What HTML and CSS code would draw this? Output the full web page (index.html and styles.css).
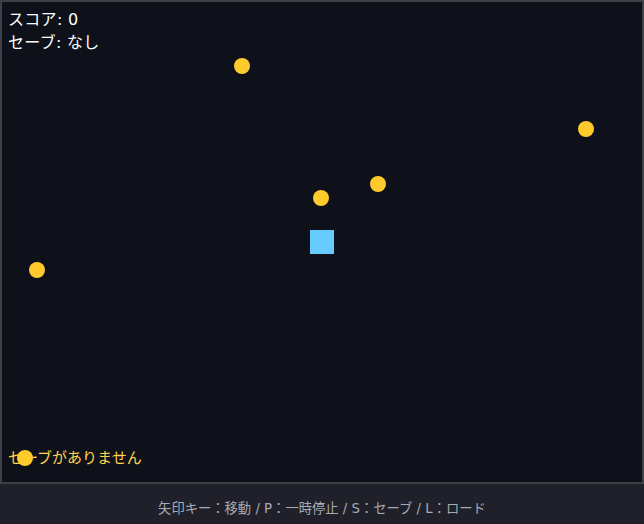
FILE: index.html
```html
<!DOCTYPE html>
<html lang="ja">
<head>
<meta charset="utf-8">
<link rel="stylesheet" href="styles.css">
</head>
<body>
<div class="game">
  <div class="hud">
    <div class="hud-line">スコア: 0</div>
    <div class="hud-line">セーブ: なし</div>
  </div>
  <div class="message">セーブがありません</div>
  <div class="coin" style="left:232px;top:56px"></div>
  <div class="coin" style="left:576px;top:119px"></div>
  <div class="coin" style="left:368px;top:174px"></div>
  <div class="coin" style="left:311px;top:188px"></div>
  <div class="coin" style="left:27px;top:260px"></div>
  <div class="coin" style="left:15px;top:448px"></div>
  <div class="player" style="left:308px;top:228px"></div>
</div>
<div class="footer">矢印キー：移動 / P：一時停止 / S：セーブ / L：ロード</div>
</body>
</html>
```

FILE: styles.css
```css
html, body {
  margin: 0;
  padding: 0;
  background: #1f2029;
  font-family: "DejaVu Sans", "Noto Sans CJK JP", sans-serif;
}
.game {
  position: relative;
  width: 640px;
  height: 480px;
  border: 2px solid #3e4048;
  background: #0f111a;
  overflow: hidden;
}
.hud {
  position: absolute;
  left: 6px;
  top: 6px;
  color: #ffffff;
  font-size: 16px;
  line-height: 23px;
  letter-spacing: 0.3px;
}
.message {
  position: absolute;
  left: 6px;
  top: 445px;
  color: #ffd54a;
  font-size: 15px;
  line-height: 23px;
}
.coin {
  position: absolute;
  width: 16px;
  height: 16px;
  border-radius: 50%;
  background: #ffca2c;
}
.player {
  position: absolute;
  width: 24px;
  height: 24px;
  background: #66ccff;
}
.footer {
  height: 40px;
  box-sizing: border-box;
  padding-top: 6px;
  display: flex;
  align-items: center;
  justify-content: center;
  color: #a8abb3;
  font-size: 13.3px;
}
```
